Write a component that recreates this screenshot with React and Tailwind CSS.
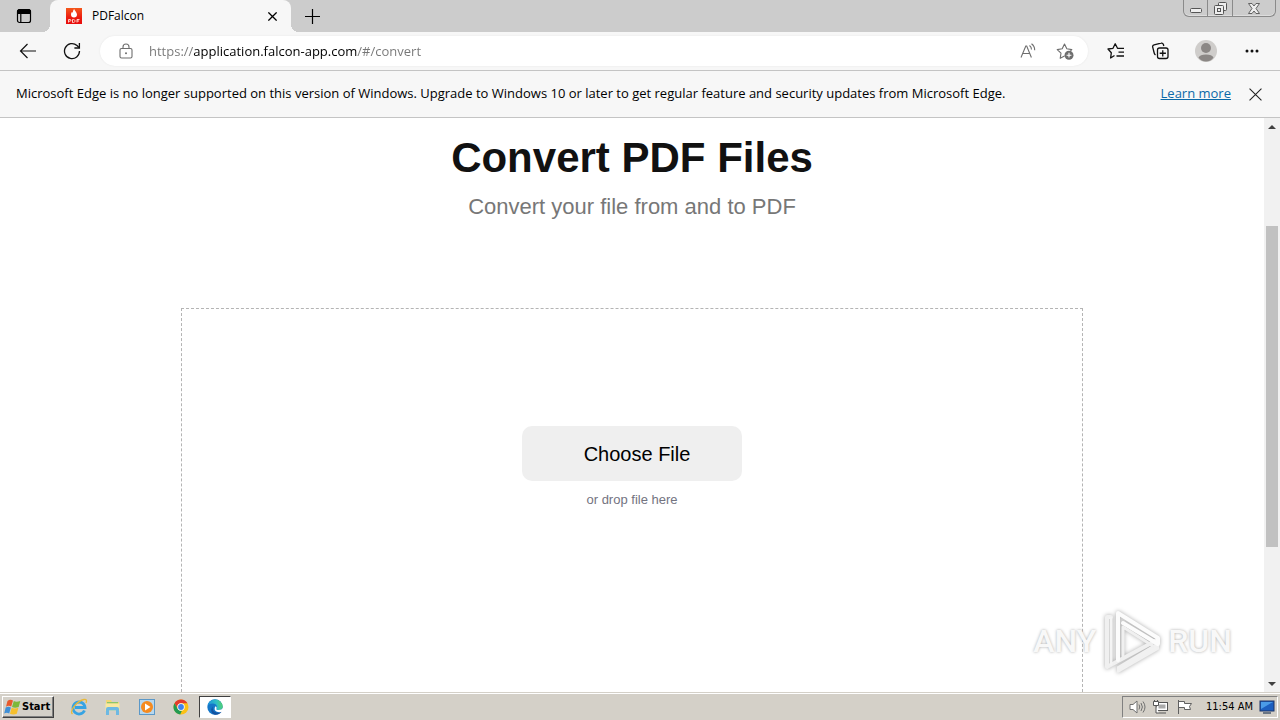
import { useState } from 'react'

const URL_TEXT = 'https://application.falcon-app.com/#/convert'

function Svg({ size = 20, width, height, children, ...rest }) {
    return (
        <svg
            width={width || size}
            height={height || size}
            viewBox={`0 0 ${width || size} ${height || size}`}
            fill="none"
            stroke="currentColor"
            aria-hidden="true"
            className="shrink-0"
            {...rest}
        >
            {children}
        </svg>
    )
}

function TabActionsIcon() {
    return (
        <Svg size={16}>
            <rect x="1.5" y="1.5" width="13" height="13" rx="2" strokeWidth="1.2" />
            <path d="M1.5 5.5V3.5a2 2 0 0 1 2-2h9a2 2 0 0 1 2 2v2z" fill="currentColor" />
            <path d="M4.8 5v9.5" strokeWidth="1.2" />
        </Svg>
    )
}

function PdfIcon() {
    return (
        <svg width="16" height="16" viewBox="0 0 16 16" aria-hidden="true">
            <defs>
                <linearGradient id="pdf" x1="0" y1="0" x2="0" y2="1">
                    <stop offset="0" stopColor="#f4581c" />
                    <stop offset="0.6" stopColor="#ec1c10" />
                    <stop offset="1" stopColor="#e80c0c" />
                </linearGradient>
            </defs>
            <rect width="16" height="16" fill="url(#pdf)" />
            <path d="M8.2 1c.2 2 2.8 3 2.8 5.6A3 3 0 0 1 8 9.6a3 3 0 0 1-3-3c0-1.2.5-2 1.2-2.8.2.6.5.9.8 1C6.8 3.3 7.2 2 8.2 1z" fill="#fff" />
            <path d="M2.5 14.500v-3h1.500a.8.8 0 0 1 0 1.700H2.500M6.500 11.500v3h1c2 0 2-3 0-3zM11 14.500v-3h2.500M11 13h2" fill="none" stroke="#ffd0c8" strokeWidth="1" />
        </svg>
    )
}

function BackIcon() {
    return (
        <Svg size={18} strokeWidth="1.2">
            <path d="M17 9H1.500M8.500 2L1.500 9l7 7" />
        </Svg>
    )
}

function RefreshIcon() {
    return (
        <Svg size={18} strokeWidth="1.3">
            <path d="M16.500 9A7.500 7.500 0 1 1 14 3.500l2 2" />
            <path d="M16.400 1v5h-5" />
        </Svg>
    )
}

function LockIcon() {
    return (
        <Svg width={14} height={16} strokeWidth="1.1">
            <rect x="1" y="5.500" width="12" height="9.500" rx="1.500" />
            <path d="M4 5.500V4a3 3 0 0 1 6 0v1.500" />
            <circle cx="7" cy="10.200" r="1" fill="currentColor" stroke="none" />
        </Svg>
    )
}

function ReadAloudIcon() {
    return (
        <Svg width={16} height={16} strokeWidth="1.1">
            <path d="M1 14.500L5.800 3h.9l4.700 11.500M2.600 10.500h7.200" />
            <path d="M9.500 2.500q2 1.500 2 4M11.500.800q3.200 2.200 3.200 6.400" />
        </Svg>
    )
}

function AddFavoriteIcon() {
    return (
        <Svg size={18} strokeWidth="1.1">
            <path d="M8.500 14l-4.300 2.300.8-5.100L1.200 7.600l5-.8L8.500 2l2.300 4.800 5 .8-1.500 1.500" strokeLinejoin="round" />
            <circle cx="13" cy="13.200" r="4.500" fill="currentColor" stroke="none" />
            <path d="M13 10.800v4.800M10.600 13.200h4.800" stroke="#fff" />
        </Svg>
    )
}

function FavoritesIcon() {
    return (
        <Svg size={18} strokeWidth="1.3">
            <path d="M7.500 13.500l-3.900 2.500.7-5.200L1 7l5-.7L8.200 1.800l2.300 4.500H17M11.500 10.200H17M9.500 14H17" strokeLinejoin="round" />
        </Svg>
    )
}

function CollectionsIcon() {
    return (
        <Svg size={18} strokeWidth="1.3">
            <rect x="6.500" y="6" width="10.500" height="10.500" rx="2" />
            <path d="M11.750 8.200v6.200M8.700 11.250h6.200" />
            <path d="M4.500 13q-1-.8-1.300-2L1.700 5.200a2 2 0 0 1 1.400-2.400L10 1.200a2 2 0 0 1 2.400 1.300l.4 1.500" />
        </Svg>
    )
}

function AvatarIcon() {
    return (
        <Svg size={22} stroke="none">
            <circle cx="11" cy="11" r="11" fill="#cfcdcb" />
            <circle cx="11" cy="8" r="5" fill="#8b8785" />
            <path d="M3.500 17.500Q5 14.500 11 14.500t7.500 3Q16 21.500 11 21.500t-7.500-4z" fill="#8b8785" />
        </Svg>
    )
}

function CloseIcon({ size = 12, strokeWidth = 1.2 }) {
    return (
        <svg width={size} height={size} viewBox="0 0 12 12" fill="none" stroke="currentColor" strokeWidth={strokeWidth} aria-hidden="true">
            <path d="M.5.5l11 11M11.500.5l-11 11" />
        </svg>
    )
}

function TabStrip() {
    return (
        <header className="relative flex h-8 shrink-0 items-stretch bg-[#cccccc]">
            <button aria-label="Tab actions menu" className="flex w-[50px] items-center justify-center pr-0.5">
                <TabActionsIcon />
            </button>
            <div className="relative flex w-[241px] items-center rounded-t-lg bg-[#f7f7f7] pl-4 pr-3">
                <span className="absolute -left-2 bottom-0 size-2 bg-[radial-gradient(circle_at_0_0,transparent_8px,#f7f7f7_8px)]" />
                <span className="absolute -right-2 bottom-0 size-2 bg-[radial-gradient(circle_at_100%_0,transparent_8px,#f7f7f7_8px)]" />
                <PdfIcon />
                <span className="ml-2.5 flex-1 text-xs">PDFalcon</span>
                <button aria-label="Close tab" className="p-0.5">
                    <CloseIcon size={9} strokeWidth={1.7} />
                </button>
            </div>
            <button aria-label="New tab" className="ml-1 flex w-[34px] items-center justify-center">
                <Svg size={15} strokeWidth="1.200">
                    <path d="M7.500 0v15M0 7.500h15" />
                </Svg>
            </button>
            <div className="ml-auto mr-1 flex h-[17px] self-start rounded-b-md border border-t-0 border-[#8a8a8a] text-[#555555] shadow-[inset_0_-1px_0_#dddddd]">
                <button aria-label="Minimize" className="flex w-6 items-center justify-center border-r border-[#8a8a8a] pt-1">
                    <Svg width={12} height={5}>
                        <rect x="0.500" y="0.500" width="11" height="4" rx="1" fill="#eee" />
                    </Svg>
                </button>
                <button aria-label="Restore" className="flex w-[25px] items-center justify-center border-r border-[#8a8a8a]">
                    <Svg size={13}>
                        <rect x="4.500" y="0.500" width="8" height="8" rx="1" fill="#eee" />
                        <rect x="0.500" y="3.500" width="9" height="9" rx="1" fill="#eee" />
                        <rect x="3.500" y="6.500" width="3" height="3" />
                    </Svg>
                </button>
                <button aria-label="Close" className="flex w-[42px] items-center justify-center">
                    <Svg width={12} height={11}>
                        <path d="M.5.5h3.500L6 3 8 .5h3.500L8 5.500l3.500 5H8L6 8l-2 2.500H.5l3.500-5z" fill="#eee" strokeWidth=".9" />
                    </Svg>
                </button>
            </div>
        </header>
    )
}

function ToolbarButton({ label, className = '', children }) {
    return (
        <button aria-label={label} className={`flex h-8 w-11 shrink-0 items-center justify-center ${className}`}>
            {children}
        </button>
    )
}

function Toolbar() {
    const [url, setUrl] = useState(URL_TEXT)

    return (
        <div className="flex h-[39px] shrink-0 items-center border-b border-[#c4c4c4] bg-[#f7f7f7] px-1.5 text-[#111111]">
            <ToolbarButton label="Back"><BackIcon /></ToolbarButton>
            <ToolbarButton label="Refresh"><RefreshIcon /></ToolbarButton>
            <div className="mx-1.5 flex h-[30px] flex-1 items-center rounded-full bg-white pl-[19px] pr-3.5 text-[#6e6e6e] shadow-[0_0_2px_#e4e4e4]">
                <LockIcon />
                {/* scheme and path are dimmed, the host stays black */}
                <input
                    type="text"
                    aria-label="Address"
                    value={url}
                    onChange={(e) => setUrl(e.target.value)}
                    spellCheck={false}
                    className="ml-4 min-w-0 flex-1 bg-[linear-gradient(90deg,#767676_45px,#000_45px,#000_208px,#767676_208px)] bg-clip-text pt-0.5 text-[13px] text-transparent caret-black outline-none"
                />
                <button aria-label="Read aloud" className="mr-5"><ReadAloudIcon /></button>
                <button aria-label="Add to favorites"><AddFavoriteIcon /></button>
            </div>
            <ToolbarButton label="Favorites"><FavoritesIcon /></ToolbarButton>
            <ToolbarButton label="Collections"><CollectionsIcon /></ToolbarButton>
            <ToolbarButton label="Profile" className="ml-0.5"><AvatarIcon /></ToolbarButton>
            <ToolbarButton label="Settings and more" className="ml-0.5">
                <Svg width={14} height={4} stroke="none" fill="currentColor">
                    <circle cx="2" cy="2" r="1.500" />
                    <circle cx="7" cy="2" r="1.500" />
                    <circle cx="12" cy="2" r="1.500" />
                </Svg>
            </ToolbarButton>
        </div>
    )
}

function InfoBar() {
    return (
        <div className="flex h-[47px] shrink-0 items-center border-b border-[#c4c4c4] bg-[#f7f7f7] pl-4 pr-4 text-[13px]">
            <p className="flex-1 whitespace-nowrap">
                Microsoft Edge is no longer supported on this version of Windows. Upgrade to Windows 10 or later to get regular feature and security updates from Microsoft Edge.
            </p>
            <a href="#more" className="text-[#0b69a8] underline">Learn more</a>
            <button aria-label="Dismiss" className="ml-4 p-0.5 text-[#222222]">
                <CloseIcon size={13} strokeWidth={1} />
            </button>
        </div>
    )
}

function Scrollbar() {
    return (
        <div className="flex w-4 shrink-0 flex-col items-center bg-[#f1f1f1] text-[#404040]">
            <button aria-label="Scroll up" className="flex h-[17px] items-center">
                <Svg width={8} height={4} stroke="none" fill="currentColor"><path d="M0 4l4-4 4 4z" /></Svg>
            </button>
            <div className="flex min-h-0 w-3 flex-1 flex-col">
                <div className="basis-[91px]" />
                <div className="basis-[321px] bg-[#c1c1c1]" />
            </div>
            <button aria-label="Scroll down" className="flex h-[17px] items-center">
                <Svg width={8} height={4} stroke="none" fill="currentColor"><path d="M0 0l4 4 4-4z" /></Svg>
            </button>
        </div>
    )
}

function Watermark() {
    return (
        <div className="absolute bottom-[18px] right-12 flex items-center gap-1.5 font-['Roboto','Liberation_Sans',sans-serif] text-[32px] font-medium text-[#f8f8f8] [text-shadow:0_0_3px_#aaaaaa]">
            <span>ANY</span>
            <svg width="60" height="66" viewBox="0 0 60 66" fill="none" strokeLinejoin="round" strokeLinecap="round" className="drop-shadow-[0_0_2px_#aaaaaa]" aria-hidden="true">
                <path d="M9 9H5v50l50-27" stroke="#f0f0f0" strokeWidth="4" />
                <path d="M9 10v46" stroke="#f4f4f4" strokeWidth="3" />
                <path d="M16 64l40-23v-6L16 59z" fill="#f1f1f1" stroke="#f1f1f1" strokeWidth="2" />
                <path d="M16 52V5l40 25v6L21 15" stroke="#fcfcfc" strokeWidth="4" />
                <path d="M21 19v29M21 19l30 19" stroke="#f0f0f0" strokeWidth="3" />
            </svg>
            <span>RUN</span>
        </div>
    )
}

function ConvertPage() {
    return (
        <main className="relative flex min-h-0 flex-1 overflow-hidden bg-white">
            <div className="flex min-w-0 flex-1 flex-col items-center overflow-hidden pt-4 font-['Liberation_Sans',Arial,sans-serif]">
                <h1 className="text-[42px] font-bold leading-[48px] text-[#111111]">Convert PDF Files</h1>
                <p className="mt-3 text-[22px] leading-[26px] text-[#777777]">Convert your file from and to PDF</p>
                <div className="mt-[88px] flex w-full max-w-[902px] flex-1 flex-col items-center border border-b-0 border-dashed border-[#b4b4b4] pt-[117px]">
                    <button className="h-[55px] w-[220px] rounded-[10px] bg-[#efefef] pl-2.5 text-[20px] text-black">
                        Choose File
                    </button>
                    <p className="mt-2.5 text-[13px] leading-[18px] text-[#73737f]">or drop file here</p>
                </div>
            </div>
            <Scrollbar />
            <Watermark />
        </main>
    )
}

function WindowsFlag() {
    return (
        <Svg width={17} height={16} stroke="none">
            <path d="M3.500 2Q6 0 9 1.500L7.200 7.500Q4.500 6 2 7.800z" fill="#e8592b" />
            <path d="M9.800 2q2.500 1.500 6.500 0L14.700 8Q11 9.500 8 8z" fill="#7db83a" />
            <path d="M1.700 8.600Q4.200 7 6.900 8.400L5.200 14.500Q2.700 13 .2 14.600z" fill="#3f8fd6" />
            <path d="M7.700 8.800q3 1.500 6.700 0l-1.600 6q-3.500 1.500-6.800 0z" fill="#f6c02d" />
        </Svg>
    )
}

function ExplorerIcon() {
    return (
        <Svg size={18}>
            <path d="M14.500 12.500A6 6 0 1 1 15 9.500H5" stroke="#36a3e3" strokeWidth="2.800" />
            <path d="M2.500 16C-1 13 7 3 14 1.500c2.500-.5 3 1 2 3.500" stroke="#e8b93a" strokeWidth="1.300" />
        </Svg>
    )
}

function FolderIcon() {
    return (
        <Svg size={18} stroke="none">
            <path d="M2 2h5l1 2h7v9H2z" fill="#f3d777" />
            <path d="M3 4h11v1.500H3z" fill="#8cc66b" />
            <path d="M1.500 5.500h14V13h-14z" fill="#f9e8a0" />
            <path d="M2 17v-6q0-2 2-2h9q2 0 2 2v6h-3v-4.500H5V17z" fill="#6db9e3" />
        </Svg>
    )
}

function MediaIcon() {
    return (
        <Svg size={18} stroke="none">
            <rect x="1.500" y="1.500" width="15" height="15" fill="#b7d7ee" stroke="#5b98c8" />
            <circle cx="9" cy="9" r="6" fill="#f58a1f" />
            <path d="M7 5.500l5.500 3.500L7 12.500z" fill="#fff" />
        </Svg>
    )
}

function ChromeIcon() {
    return (
        <Svg size={16} stroke="none">
            <circle cx="8" cy="8" r="7.500" fill="#fbc116" />
            <path d="M1.500 4.200A7.500 7.500 0 0 1 14.500 4.300H8A3.700 3.700 0 0 0 4.800 9.900z" fill="#e33b2e" />
            <path d="M1.500 4.200l3.300 5.700A3.700 3.700 0 0 0 9 11.500L7.200 15.500A7.500 7.500 0 0 1 1.500 4.200z" fill="#219a52" />
            <circle cx="8" cy="8" r="3.700" fill="#fff" />
            <circle cx="8" cy="8" r="2.900" fill="#3f83ed" />
        </Svg>
    )
}

function EdgeIcon() {
    return (
        <svg width="16" height="16" viewBox="0 0 16 16" aria-hidden="true">
            <defs>
                <linearGradient id="edge" x1="0" y1="0.300" x2="1" y2="0.200">
                    <stop offset="0" stopColor="#1c93dd" />
                    <stop offset="0.600" stopColor="#2fbfc4" />
                    <stop offset="1" stopColor="#58d364" />
                </linearGradient>
            </defs>
            <circle cx="8" cy="8" r="7.700" fill="#1476c8" />
            <path d="M.4 7A7.700 7.700 0 0 1 15.700 7.500c0 2.500-2 3.500-4 3.500-1.700 0-2.700-.7-2.200-1.500C11 7.500 9 4.500 6 4.500 3 4.500 1 5.800.4 7z" fill="url(#edge)" />
            <path d="M6 7.500C4.500 10 7 14 11 13.700c1.800 0 3-.7 4-1.700-1 2.500-4 4-7 3.700C4 15 3 10 6 7.500z" fill="#1252a0" />
            <path d="M8.500 7.200q1.600.6 1 2.300-.6 1.500 2.200 1.500 2.800 0 4.300-1.700v3q-3.500 1.700-6.700.2-3-2-.8-5.300z" fill="#fff" />
        </svg>
    )
}

const launchers = [
    { name: 'Internet Explorer', Icon: ExplorerIcon },
    { name: 'Windows Explorer', Icon: FolderIcon },
    { name: 'Media Player', Icon: MediaIcon },
    { name: 'Chrome', Icon: ChromeIcon },
]

function Taskbar() {
    return (
        <footer className="flex h-7 shrink-0 items-center border-t border-[#d4d0c8] bg-[#d4d0c8] px-0.5 pt-px font-['DejaVu_Sans_Condensed','DejaVu_Sans',sans-serif] text-[11px] shadow-[inset_0_1px_0_#ffffff]">
            <button className="flex h-[22px] w-[52px] items-center gap-px border border-b-[#404040] border-l-white border-r-[#404040] border-t-white pl-px font-bold shadow-[inset_-1px_-1px_0_#808080]">
                <WindowsFlag />
                Start
            </button>
            <nav className="ml-2 flex">
                {launchers.map(({ name, Icon }) => (
                    <button key={name} aria-label={name} className="flex w-[34px] items-center justify-center">
                        <Icon />
                    </button>
                ))}
            </nav>
            <button aria-label="Microsoft Edge" className="ml-px flex h-[22px] w-8 items-center justify-center border border-b-white border-l-[#404040] border-r-white border-t-[#404040] bg-white">
                <EdgeIcon />
            </button>
            <div className="ml-auto flex h-[22px] items-center border border-b-white border-l-[#808080] border-r-white border-t-[#808080] pl-1.5 pr-0.5">
                <Svg width={17} height={16} stroke="#707070">
                    <path d="M1 5.500h3L8 2v12l-4-3.500H1z" fill="#fff" />
                    <path d="M10 5.500q1.500 2.500 0 5M12 4q2.800 4 0 8M14 2.500q4 5.500 0 11" />
                </Svg>
                <Svg width={17} height={16} stroke="#555" className="ml-1.5 shrink-0">
                    <rect x="4.500" y="3.500" width="11" height="8" fill="#fff" />
                    <rect x="6.500" y="5.500" width="7" height="4" fill="#aaa" stroke="none" />
                    <path d="M7 14h7" />
                    <path d="M1.500 2.500h5v4h-5zM4 6.500V14h3M2.500 1v1.500M5.500 1v1.500" fill="#fff" />
                </Svg>
                <Svg width={17} height={16} stroke="#606060" className="ml-2 shrink-0">
                    <path d="M1.500 1v14M1.500 2.500h6v2h7l-2 3 1 3h-6v-2h-6z" fill="#fff" />
                </Svg>
                <time className="ml-3">11:54 AM</time>
                <Svg width={16} height={14} stroke="none" className="ml-1.5 shrink-0">
                    <rect x="1" y="1" width="14" height="10" fill="#1c5fc0" stroke="#1c3566" />
                    <path d="M2 2h12L2 9z" fill="#4a9be8" />
                    <path d="M4 13h8" stroke="#6b7684" strokeWidth="2" />
                </Svg>
            </div>
        </footer>
    )
}

export default function App() {
    return (
        <div className="flex h-screen flex-col overflow-hidden bg-white font-['Open_Sans','Noto_Sans',sans-serif] text-black">
            <TabStrip />
            <Toolbar />
            <InfoBar />
            <ConvertPage />
            <Taskbar />
        </div>
    )
}
